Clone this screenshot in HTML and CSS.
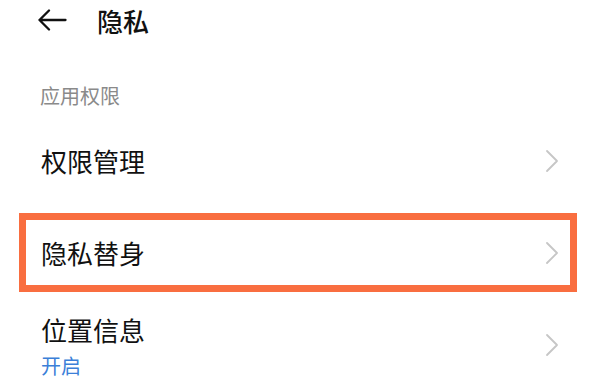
FILE: index.html
```html
<!DOCTYPE html>
<html lang="zh-CN">
<head>
<meta charset="utf-8">
<link rel="stylesheet" href="styles.css">
</head>
<body>
<div class="page">
  <div class="header">
    <svg class="back" width="30" height="22" viewBox="0 0 30 22">
      <path d="M28.5 11H2.5M12 1.5L2.5 11L12 20.5" fill="none" stroke="#111" stroke-width="2.3" stroke-linecap="round" stroke-linejoin="round"/>
    </svg>
    <div class="title">隐私</div>
  </div>
  <div class="section">应用权限</div>
  <div class="list">
    <div class="row first">
      <div class="text"><div class="label">权限管理</div></div>
      <svg class="chev" width="14" height="24" viewBox="0 0 14 24"><path d="M2 2L12 12L2 22" fill="none" stroke="#c6c6c6" stroke-width="1.8" stroke-linecap="round" stroke-linejoin="round"/></svg>
    </div>
    <div class="row highlight">
      <div class="text"><div class="label">隐私替身</div></div>
      <svg class="chev" width="14" height="24" viewBox="0 0 14 24"><path d="M2 2L12 12L2 22" fill="none" stroke="#c6c6c6" stroke-width="1.8" stroke-linecap="round" stroke-linejoin="round"/></svg>
    </div>
    <div class="row tall">
      <div class="text">
        <div class="label">位置信息</div>
        <div class="sub">开启</div>
      </div>
      <svg class="chev" width="14" height="24" viewBox="0 0 14 24"><path d="M2 2L12 12L2 22" fill="none" stroke="#c6c6c6" stroke-width="1.8" stroke-linecap="round" stroke-linejoin="round"/></svg>
    </div>
  </div>
</div>
</body>
</html>
```
FILE: styles.css
```css
html, body {
  margin: 0;
  padding: 0;
  background: #ffffff;
}
body {
  font-family: "Noto Sans CJK SC", "Noto Sans", sans-serif;
  color: #111;
  width: 600px;
  height: 390px;
  overflow: hidden;
}
.page {
  display: flex;
  flex-direction: column;
}
.header {
  height: 42px;
  display: flex;
  align-items: center;
  padding-left: 37px;
  gap: 30px;
}
.back {
  display: block;
  margin-top: -2px;
}
.title {
  font-size: 26px;
  font-weight: 500;
  line-height: 42px;
}
.section {
  margin-top: 42px;
  padding-left: 40px;
  font-size: 20px;
  line-height: 24px;
  color: #8a8a8a;
}
.list {
  display: flex;
  flex-direction: column;
  padding: 0 23px 0 19px;
}
.row {
  height: 65px;
  border: 7px solid transparent;
  padding: 0 11px 0 15px;
  display: flex;
  align-items: center;
  justify-content: space-between;
}
.row.first {
  margin-top: 13px;
}
.row.highlight {
  margin-top: 13px;
  border-color: #f96e40;
}
.row.tall {
  border-top: 0;
  height: 90px;
  align-items: flex-start;
}
.row.tall .text {
  padding-top: 20px;
}
.row.tall .chev {
  margin-top: 41px;
}
.label {
  font-size: 26px;
  line-height: 36px;
  color: #111;
}
.sub {
  font-size: 20px;
  line-height: 26px;
  color: #3b7fd8;
  margin-top: 5px;
}
.chev {
  display: block;
}
```
